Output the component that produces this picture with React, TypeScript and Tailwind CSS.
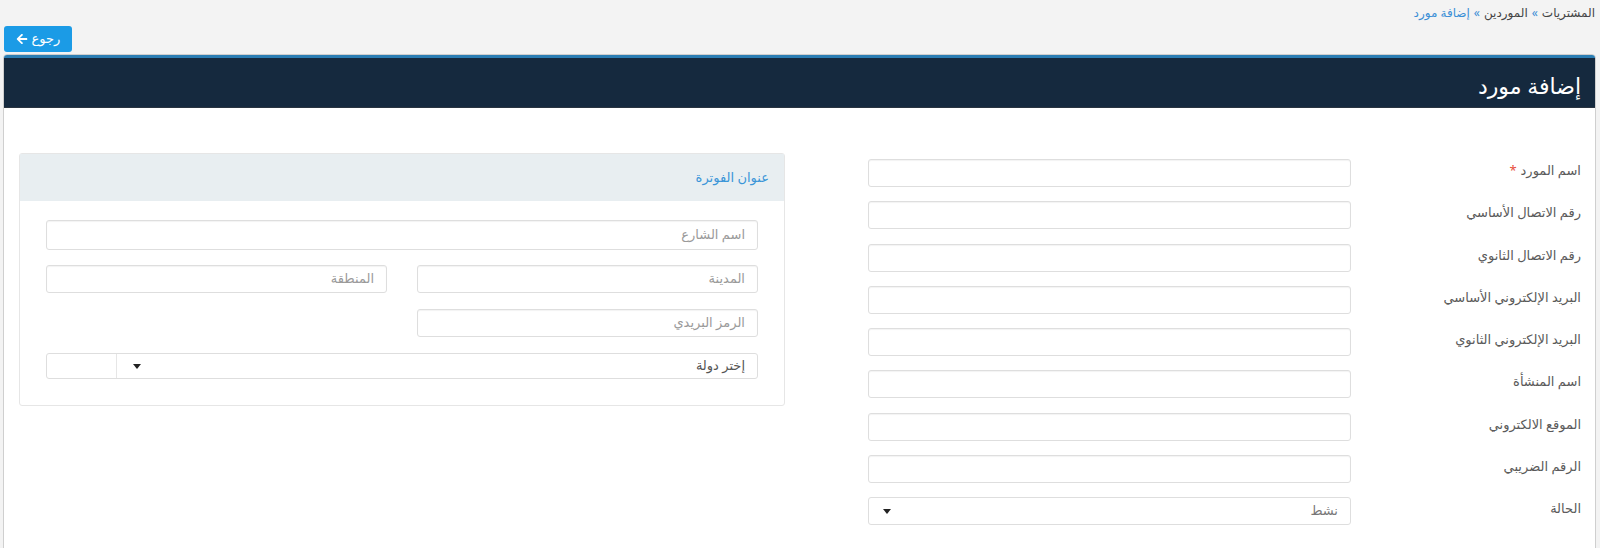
import React from "react";
import { FaArrowLeft } from "react-icons/fa";

const font = { fontFamily: '"Noto Sans", "DejaVu Sans", sans-serif' };

function Caret() {
  return (
    <svg width="8" height="5" viewBox="0 0 8 5" className="shrink-0">
      <path d="M0 0 L8 0 L4 5 Z" fill="#222" />
    </svg>
  );
}

function TextInput({ placeholder, className = "" }: { placeholder?: string; className?: string }) {
  return (
    <div
      className={`bg-white border border-[#dedede] rounded-[3px] shadow-[inset_0_1px_1px_rgba(0,0,0,0.05)] flex items-center px-[12px] text-[13px] text-[#9a9a9a] ${className}`}
    >
      {placeholder}
    </div>
  );
}

const fields = [
  { label: "اسم المورد", req: true },
  { label: "رقم الاتصال الأساسي" },
  { label: "رقم الاتصال الثانوي" },
  { label: "البريد الإلكتروني الأساسي" },
  { label: "البريد الإلكتروني الثانوي" },
  { label: "اسم المنشأة" },
  { label: "الموقع الالكتروني" },
  { label: "الرقم الضريبي" },
];

export default function App() {
  return (
    <div dir="rtl" style={font} className="bg-[#f3f3f3] min-h-[548px] w-full overflow-hidden">
      {/* breadcrumb */}
      <div className="h-[26px] pr-[5px] flex items-center text-[12px] text-[#444] gap-[4px]">
        <span>المشتريات</span>
        <span className="text-[#3a8fd6]">»</span>
        <span>الموردين</span>
        <span className="text-[#3a8fd6]">»</span>
        <span className="text-[#3a8fd6]">إضافة مورد</span>
      </div>
      {/* back button */}
      <div className="flex justify-end pl-[4px] h-[28px]">
        <button className="w-[68px] h-[26px] bg-[#1b9be6] rounded-[3px] text-white text-[13px] flex items-center justify-center gap-[4px]">
          <span>رجوع</span>
          <FaArrowLeft className="w-[12px] h-[12px]" />
        </button>
      </div>
      {/* card */}
      <div className="ml-[3px] mr-[4px] border border-[#cfcfcf] rounded-t-[4px] bg-white min-h-[500px]">
        <div className="h-[3px] bg-[#2b7db3] rounded-t-[3px]" />
        <div className="h-[50px] bg-[#15293e] border-b border-[#2a3440] flex items-center pr-[14px]">
          <h1 className="text-white text-[22px] leading-none pt-[4px]">إضافة مورد</h1>
        </div>
        <div className="flex px-[14px]">
          {/* right form */}
          <div className="flex-1 pt-[51px] flex flex-col gap-[14.25px]">
            {fields.map((f) => (
              <div key={f.label} className="flex">
                <div className="w-[230px] h-[28px] text-[13px] text-[#5a5a5a] leading-[20px] pt-[1px]">
                  {f.label}
                  {f.req && <span className="text-[#e74c3c] mr-[4px]">*</span>}
                </div>
                <TextInput className="w-[483px] h-[28px]" />
              </div>
            ))}
            <div className="flex">
              <div className="w-[230px] h-[28px] text-[13px] text-[#5a5a5a] leading-[20px] pt-[1px]">الحالة</div>
              <div className="w-[483px] h-[28px] bg-white border border-[#dedede] rounded-[3px] flex items-center justify-between pr-[12px] pl-[14px] text-[13px] text-[#777]">
                <span>نشط</span>
                <Caret />
              </div>
            </div>
          </div>
          {/* billing panel */}
          <div className="w-[766px] mt-[45px] ml-[1px] self-start border border-[#e6e6e6] rounded-[3px]">
            <div className="h-[47px] bg-[#e8eef1] flex items-center pr-[15px] text-[13px] text-[#3a95d8]">
              عنوان الفوترة
            </div>
            <div className="px-[26px] pt-[19px] pb-[26px] flex flex-col">
              <TextInput placeholder="اسم الشارع" className="h-[30px]" />
              <div className="grid grid-cols-2 gap-[30px] mt-[15px]">
                <TextInput placeholder="المدينة" className="h-[28px]" />
                <TextInput placeholder="المنطقة" className="h-[28px]" />
              </div>
              <div className="grid grid-cols-2 gap-[30px] mt-[16px]">
                <TextInput placeholder="الرمز البريدي" className="h-[28px]" />
                <div />
              </div>
              <div className="mt-[16px] h-[26px] bg-white border border-[#dedede] rounded-[3px] flex items-stretch text-[13px] text-[#555]">
                <div className="flex-1 flex items-center justify-between pr-[12px] pl-[16px]">
                  <span>إختر دولة</span>
                  <Caret />
                </div>
                <div className="w-[70px] border-r border-[#e6e6e6]" />
              </div>
            </div>
          </div>
        </div>
      </div>
    </div>
  );
}
